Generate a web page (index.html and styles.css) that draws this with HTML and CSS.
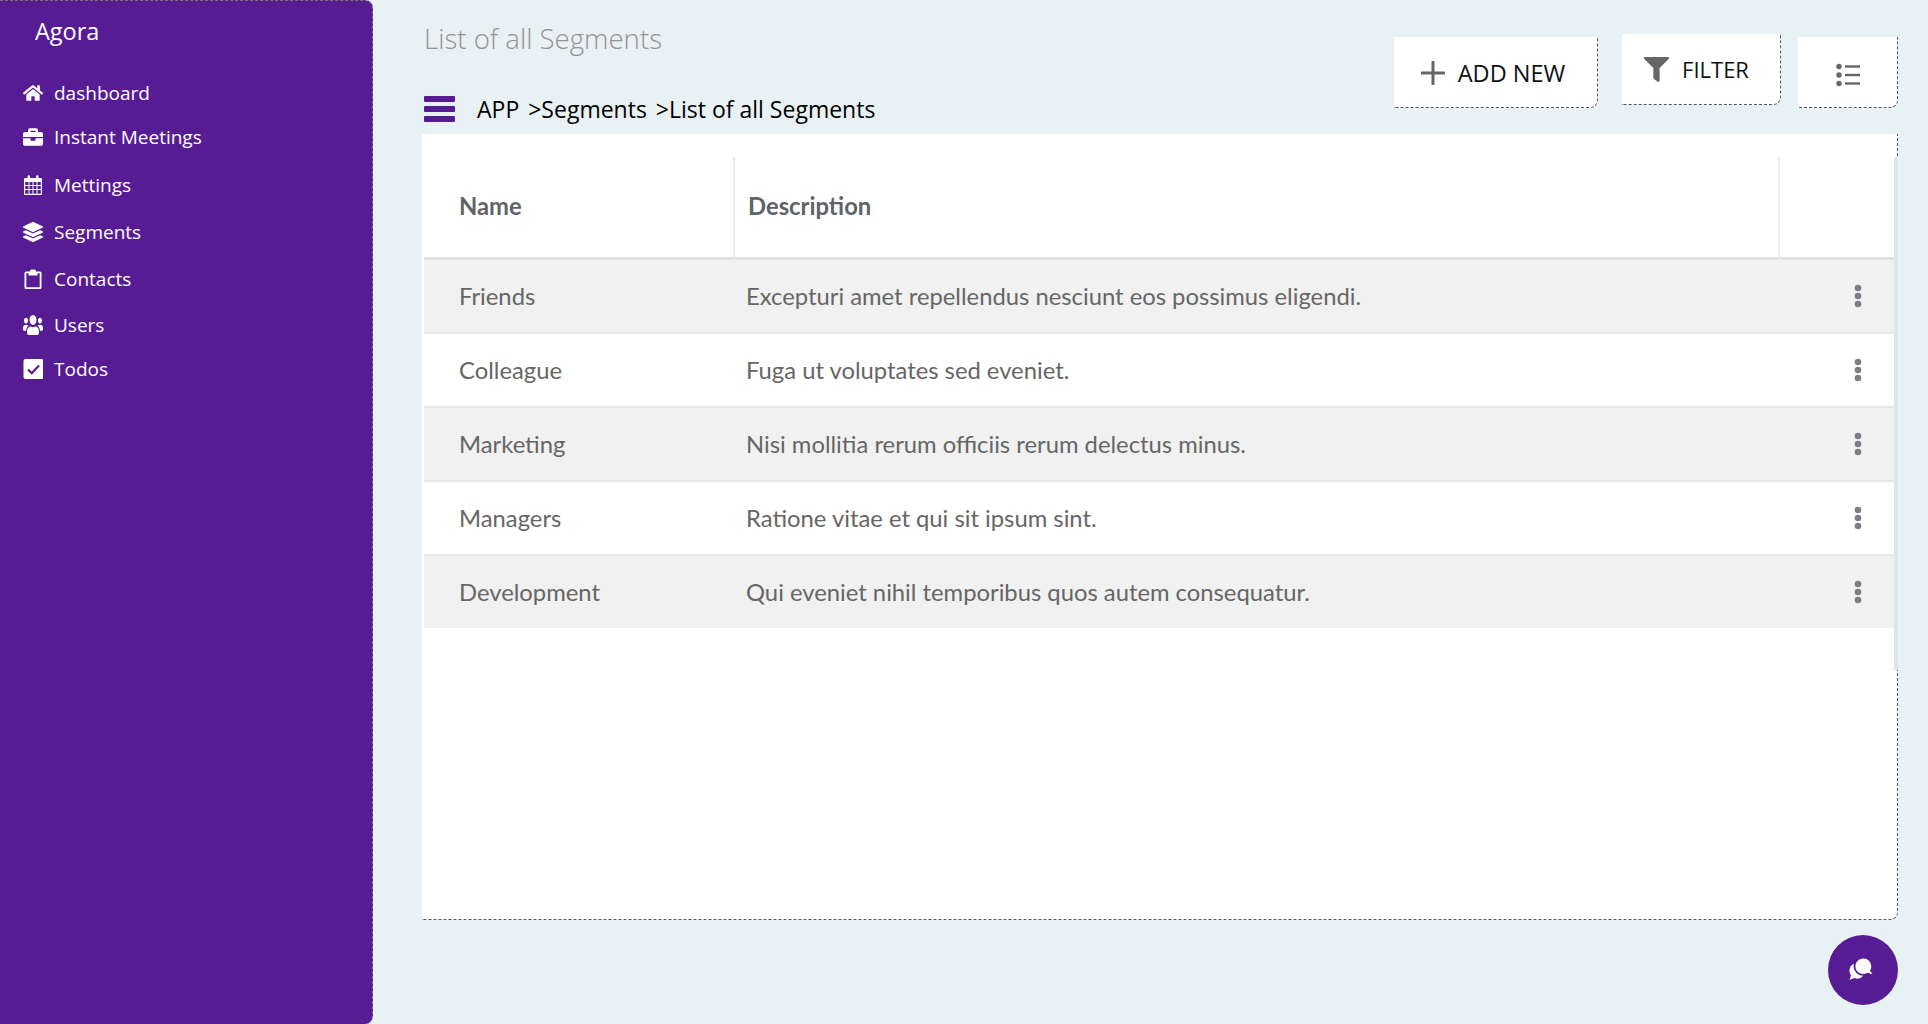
FILE: index.html
```html
<!DOCTYPE html>
<html lang="en">
<head>
<meta charset="utf-8">
<title>Agora</title>
<link rel="stylesheet" href="styles.css">
</head>
<body>
<aside class="sidebar">
  <div class="brand">Agora</div>
  <nav class="nav">
    <a class="nav-item"><svg class="nav-icon" viewBox="0 0 576 512"><path d="M280.37 148.26L96 300.11V464a16 16 0 0 0 16 16l112.06-.29a16 16 0 0 0 15.92-16V368a16 16 0 0 1 16-16h64a16 16 0 0 1 16 16v95.64a16 16 0 0 0 16 16.05L464 480a16 16 0 0 0 16-16V300L295.67 148.26a12.19 12.19 0 0 0-15.3 0zM571.6 251.47L488 182.56V44.05a12 12 0 0 0-12-12h-56a12 12 0 0 0-12 12v72.61L318.47 43a48 48 0 0 0-61 0L4.34 251.47a12 12 0 0 0-1.6 16.9l25.5 31A12 12 0 0 0 45.15 301l235.22-193.74a12.19 12.19 0 0 1 15.3 0L530.9 301a12 12 0 0 0 16.9-1.6l25.5-31a12 12 0 0 0-1.7-16.93z"/></svg>dashboard</a>
    <a class="nav-item"><svg class="nav-icon" viewBox="0 0 512 512"><path d="M320 336c0 8.84-7.16 16-16 16h-96c-8.84 0-16-7.16-16-16v-48H0v144c0 25.6 22.4 48 48 48h416c25.6 0 48-22.4 48-48V288H320v48zm144-208h-80V80c0-25.6-22.4-48-48-48H176c-25.6 0-48 22.4-48 48v48H48c-25.6 0-48 22.4-48 48v80h512v-80c0-25.6-22.4-48-48-48zm-144 0H192V96h128v32z"/></svg>Instant Meetings</a>
    <a class="nav-item"><svg class="nav-icon" viewBox="0 0 20 20"><path fill-rule="evenodd" d="M2 3h2.500V1.500a1.200 1.200 0 0 1 2.400 0V3h6.200V1.500a1.200 1.200 0 0 1 2.400 0V3H18a1 1 0 0 1 1 1v15a1 1 0 0 1-1 1H2a1 1 0 0 1-1-1V4a1 1 0 0 1 1-1zM2.200 7v3h3.300V7zm4.300 0v3h3V7zm4 0v3h3V7zm4 0v3h3.300V7zM2.200 11v3h3.300v-3zm4.300 0v3h3v-3zm4 0v3h3v-3zm4 0v3h3.300v-3zM2.200 15v3.800h3.300V15zm4.300 0v3.800h3V15zm4 0v3.800h3V15zm4 0v3.800h3.300V15z"/></svg>Mettings</a>
    <a class="nav-item"><svg class="nav-icon" viewBox="0 0 512 512"><path d="M12.41 148.02l232.94 105.67c6.8 3.09 14.49 3.09 21.29 0l232.94-105.67c16.55-7.51 16.55-32.52 0-40.03L266.65 2.31a25.607 25.607 0 0 0-21.29 0L12.41 107.98c-16.55 7.51-16.55 32.53 0 40.04zm487.18 88.28l-58.09-26.33-161.64 73.27c-7.56 3.43-15.59 5.17-23.86 5.17s-16.29-1.74-23.86-5.17L70.51 209.97l-58.1 26.33c-16.55 7.5-16.55 32.5 0 40l232.94 105.59c6.8 3.08 14.49 3.08 21.29 0L499.59 276.3c16.55-7.5 16.55-32.5 0-40zm0 127.8l-57.87-26.23-161.86 73.37c-7.56 3.43-15.59 5.17-23.86 5.17s-16.29-1.74-23.86-5.17L70.29 337.87 12.41 364.1c-16.55 7.5-16.55 32.5 0 40l232.94 105.59c6.8 3.08 14.49 3.08 21.29 0L499.59 404.1c16.55-7.5 16.55-32.5 0-40z"/></svg>Segments</a>
    <a class="nav-item"><svg class="nav-icon" viewBox="0 0 20 20"><path fill-rule="evenodd" d="M3 2.500h4V2a1.500 1.500 0 0 1 1.500-1.500h3A1.500 1.500 0 0 1 13 2v.5h4a1.500 1.500 0 0 1 1.500 1.500v14.500A1.500 1.500 0 0 1 17 20H3a1.500 1.500 0 0 1-1.500-1.500V4A1.500 1.500 0 0 1 3 2.500zM3.300 4.300v13.900h13.400V4.300H14.500V6.500h-9V4.300z"/></svg>Contacts</a>
    <a class="nav-item"><svg class="nav-icon" viewBox="0 32 640 448" preserveAspectRatio="none"><path d="M96 224c35.3 0 64-28.7 64-64s-28.7-64-64-64-64 28.7-64 64 28.7 64 64 64zm448 0c35.3 0 64-28.7 64-64s-28.7-64-64-64-64 28.7-64 64 28.7 64 64 64zm32 32h-64c-17.6 0-33.5 7.1-45.1 18.6 40.3 22.1 68.9 62 75.1 109.4h66c17.7 0 32-14.3 32-32v-32c0-35.3-28.7-64-64-64zm-256 0c61.9 0 112-50.1 112-112S381.9 32 320 32 208 82.1 208 144s50.1 112 112 112zm76.8 32h-8.3c-20.8 10-43.9 16-68.5 16s-47.6-6-68.5-16h-8.3C179.6 288 128 339.6 128 403.2V432c0 26.5 21.5 48 48 48h288c26.5 0 48-21.5 48-48v-28.8c0-63.6-51.6-115.2-115.2-115.2zm-223.7-13.4C161.5 263.1 145.6 256 128 256H64c-35.3 0-64 28.7-64 64v32c0 17.7 14.3 32 32 32h65.9c6.3-47.4 34.9-87.3 75.2-109.4z"/></svg>Users</a>
    <a class="nav-item"><svg class="nav-icon" viewBox="0 0 20 20"><rect x="0.500" y="0" width="20" height="20" rx="2"/><path class="check" d="M5 10.500l3.800 3.700 7.200-7.700"/></svg>Todos</a>
  </nav>
</aside>
<main class="main">
  <header class="topbar">
    <div class="headings">
      <h1 class="page-title">List of all Segments</h1>
      <div class="crumbs">
        <svg class="burger" viewBox="0 0 31 26"><rect y="0" width="31" height="6" rx="1"/><rect y="10" width="31" height="6" rx="1"/><rect y="20" width="31" height="6" rx="1"/></svg>
        <span class="crumb-text"><span class="crumb">APP</span><span class="crumb">&gt;Segments</span><span class="crumb">&gt;List of all Segments</span></span>
      </div>
    </div>
    <div class="actions">
      <button class="btn btn-add"><svg class="btn-plus" viewBox="0 0 24 24"><path d="M12 1v22M1 12h22"/></svg>ADD NEW</button>
      <button class="btn btn-filter"><svg class="btn-funnel" viewBox="0 0 512 512"><path d="M487.976 0H24.028C2.71 0-8.047 25.866 7.058 40.971L192 225.941V432c0 7.831 3.821 15.17 10.237 19.662l80 55.98C298.02 518.69 320 507.493 320 487.98V225.941l184.947-184.97C520.021 25.896 509.338 0 487.976 0z"/></svg>FILTER</button>
      <button class="btn btn-list" aria-label="Columns"><svg class="btn-lines" viewBox="0 0 24 24"><circle cx="3" cy="3.500" r="2.700"/><circle cx="3" cy="12" r="2.700"/><circle cx="3" cy="20.500" r="2.700"/><rect x="9" y="2.300" width="15" height="2.400"/><rect x="9" y="10.800" width="15" height="2.400"/><rect x="9" y="19.300" width="15" height="2.400"/></svg></button>
    </div>
  </header>
  <section class="card">
    <div class="table-wrap">
      <table class="grid">
        <colgroup><col class="col-name"><col class="col-desc"><col class="col-menu"></colgroup>
        <thead>
          <tr><th>Name</th><th>Description</th><th></th></tr>
        </thead>
        <tbody>
          <tr><td>Friends</td><td>Excepturi amet repellendus nesciunt eos possimus eligendi.</td><td class="menu"><svg class="kebab" viewBox="0 0 8 24"><circle cx="4" cy="4" r="3.300"/><circle cx="4" cy="12" r="3.300"/><circle cx="4" cy="20" r="3.300"/></svg></td></tr>
          <tr><td>Colleague</td><td>Fuga ut voluptates sed eveniet.</td><td class="menu"><svg class="kebab" viewBox="0 0 8 24"><circle cx="4" cy="4" r="3.300"/><circle cx="4" cy="12" r="3.300"/><circle cx="4" cy="20" r="3.300"/></svg></td></tr>
          <tr><td>Marketing</td><td>Nisi mollitia rerum officiis rerum delectus minus.</td><td class="menu"><svg class="kebab" viewBox="0 0 8 24"><circle cx="4" cy="4" r="3.300"/><circle cx="4" cy="12" r="3.300"/><circle cx="4" cy="20" r="3.300"/></svg></td></tr>
          <tr><td>Managers</td><td>Ratione vitae et qui sit ipsum sint.</td><td class="menu"><svg class="kebab" viewBox="0 0 8 24"><circle cx="4" cy="4" r="3.300"/><circle cx="4" cy="12" r="3.300"/><circle cx="4" cy="20" r="3.300"/></svg></td></tr>
          <tr><td>Development</td><td>Qui eveniet nihil temporibus quos autem consequatur.</td><td class="menu"><svg class="kebab" viewBox="0 0 8 24"><circle cx="4" cy="4" r="3.300"/><circle cx="4" cy="12" r="3.300"/><circle cx="4" cy="20" r="3.300"/></svg></td></tr>
        </tbody>
      </table>
    </div>
  </section>
</main>
<button class="fab" aria-label="Chat"><svg class="fab-icon" viewBox="0 0 24 24"><path d="M14.500 0.500a7.800 7.800 0 0 1 7.800 7.800c0 1.800-.5 3.300-1.300 4.500l2.500 3.400-5-1.400a7.800 7.800 0 1 1-4-14.300z"/><path d="M5 5.500a9.500 9.500 0 0 0 5 11.300c1.500.7 3 .9 4.400.8a7.800 7.800 0 0 1-5.200 3c-1.500.2-2.900-.1-4.100-.7L0.500 22l1.500-4.600A8 8 0 0 1 5 5.500z"/></svg></button>
</body>
</html>
```
FILE: styles.css
```css
* { box-sizing: border-box; }
html, body { height: 100%; }
body {
  margin: 0;
  display: flex;
  height: 1024px;
  overflow: hidden;
  background: #e8f1f4;
  font-family: "Open Sans", "Noto Sans", sans-serif;
  color: #000;
}
.sidebar {
  flex: 0 0 373px;
  height: 1024px;
  background: #571c94;
  color: #fff;
  border-top: 1px dashed #777;
  border-right: 1px dashed #777;
  border-radius: 0 8px 8px 0;
}
.brand {
  padding: 13px 0 0 35px;
  font-size: 23.500px;
  line-height: 34px;
}
.nav {
  display: grid;
  grid-template-rows: 44px 48px 47px 47px 46px 44px 44px;
  margin-top: 22px;
  padding-left: 23px;
}
.nav-item {
  display: flex;
  align-items: center;
  gap: 11px;
  font-size: 19px;
  height: 45px;
}
.nav-icon { width: 20px; height: 20px; fill: #fff; flex: none; }
.check { fill: none; stroke: #571c94; stroke-width: 2.200; }
.main {
  flex: 1;
  display: flex;
  flex-direction: column;
  padding: 0 30px 0 49px;
}
.topbar {
  height: 134px;
  display: flex;
  justify-content: space-between;
  flex: none;
}
.headings { padding-left: 2px; }
.page-title {
  margin: 20px 0 0;
  font-size: 27.600px;
  line-height: 36px;
  font-weight: 300;
  color: #939393;
}
.crumbs {
  display: flex;
  align-items: center;
  gap: 22px;
  margin-top: 39px;
  height: 28px;
}
.burger { width: 31px; height: 26px; fill: #571c94; }
.crumb-text { font-size: 23px; line-height: 28px; }
.crumb { margin-right: 9px; }
.actions { display: flex; align-items: flex-start; }
.btn {
  display: flex;
  align-items: center;
  justify-content: center;
  height: 71px;
  margin-top: 37px;
  background: #fff;
  border: 0;
  border-right: 1px dashed #555;
  border-bottom: 1px dashed #555;
  border-radius: 0 0 8px 0;
  font: inherit;
  color: #111;
  font-size: 23.500px;
  padding: 0;
}
.btn-add { width: 204px; gap: 13px; margin-right: 24px; padding: 2px 5px 0 0; }
.btn-filter { width: 159px; gap: 13px; margin-top: 34px; margin-right: 17px; font-size: 22px; padding-right: 9px; }
.btn-list { width: 100px; padding-top: 5px; }
.btn-plus { width: 24px; height: 24px; fill: none; stroke: #666; stroke-width: 3; stroke-linecap: round; }
.btn-funnel { width: 25px; height: 25px; fill: #666; }
.btn-lines { width: 24px; height: 24px; fill: #666; }
.card {
  flex: none;
  height: 786px;
  padding: 23px 0 0 2px;
  background: #fff;
  border-right: 1px dashed #555;
  border-bottom: 1px dashed #555;
  border-radius: 0 0 8px 0;
}
.table-wrap {
  height: 513px;
  margin-right: -1px;
  border-right: 4px solid #dfe4e8;
}
.grid {
  width: 100%;
  border-collapse: separate;
  border-spacing: 0;
  table-layout: fixed;
  font-family: Lato, "Open Sans", sans-serif;
  font-size: 23.800px;
  color: #666;
}
.col-name { width: 311px; }
.col-desc { width: 1045px; }
.grid th {
  height: 103px;
  padding: 0 0 2px 13px;
  text-align: left;
  font-weight: 700;
  color: #5f6368;
  border-bottom: 3px solid #e0e0e0;
  border-right: 2px solid #ececec;
}
.grid th:first-child { padding-left: 35px; }
.grid th:last-child { border-right: 0; }
.grid td {
  height: 74px;
  padding: 0 0 0 11px;
  border-bottom: 2px solid #e6e6e6;
}
.grid td:first-child { padding-left: 35px; }
.grid tbody tr:nth-child(odd) td { background: #f1f1f1; }
.grid tbody tr:last-child td { border-bottom: 0; height: 72px; }
.grid td.menu { padding: 0 0 0 74px; }
.kebab { display: block; width: 8px; height: 24px; fill: #7c7f88; }
.fab {
  position: absolute;
  left: 1828px;
  top: 935px;
  width: 70px;
  height: 70px;
  padding: 0 4px 0 0;
  border: 0;
  border-radius: 50%;
  background: #571c94;
  display: flex;
  align-items: center;
  justify-content: center;
}
.fab-icon { width: 24px; height: 24px; fill: #fff; }
```
